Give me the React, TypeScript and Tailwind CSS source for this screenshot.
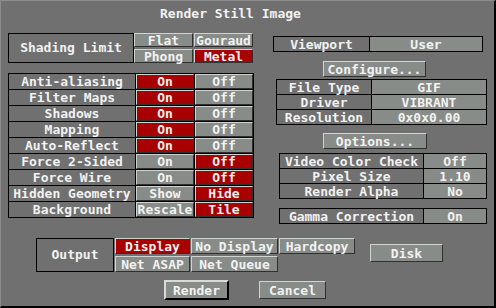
import React from "react";

const BG = "bg-[#707070]";

const toggles: [string, string, string, number][] = [
  ["Anti-aliasing", "On", "Off", 0],
  ["Filter Maps", "On", "Off", 0],
  ["Shadows", "On", "Off", 0],
  ["Mapping", "On", "Off", 0],
  ["Auto-Reflect", "On", "Off", 0],
  ["Force 2-Sided", "On", "Off", 1],
  ["Force Wire", "On", "Off", 1],
  ["Hidden Geometry", "Show", "Hide", 1],
  ["Background", "Rescale", "Tile", 1],
];

const Btn = ({ label, on, className = "" }: { label: string; on?: boolean; className?: string }) => (
  <div
    className={`flex items-center justify-center whitespace-nowrap leading-none border-t border-l border-t-[#d0d4d0] border-l-[#d0d4d0] border-b border-r border-b-[#303030] border-r-[#303030] ${
      on ? "bg-[#a80000]" : "bg-[#888c88]"
    } ${className}`}
  >
    {label}
  </div>
);

const Cell = ({ label, value }: { label: string; value: string }) => (
  <>
    <div className={`${BG} flex items-center justify-center whitespace-nowrap leading-none`}>{label}</div>
    <div className="bg-[#888c88] flex items-center justify-center whitespace-nowrap leading-none">{value}</div>
  </>
);

export default function App() {
  return (
    <div
      className={`w-[496px] h-[308px] ${BG} border-t border-l border-[#8c8c8c] border-r-2 border-b-2 border-r-black border-b-black text-[#f2f2f2] font-bold text-[13px] flex flex-col`}
      style={{ fontFamily: '"DejaVu Sans Mono", "Liberation Mono", monospace' }}
    >
      <div className="h-[32px] pl-[159px] pt-[5px] leading-[16px] whitespace-nowrap">Render Still Image</div>

      <div className="flex items-start">
        {/* left column */}
        <div className="ml-[7px] w-[246px] flex flex-col">
          <div className="flex">
            <div className="w-[126px] h-[30px] border border-black flex items-center justify-center">Shading Limit</div>
            <div className="grid grid-cols-[59px_59px] grid-rows-[14px_14px] gap-x-px gap-y-[2px]">
              <Btn label="Flat" />
              <Btn label="Gouraud" />
              <Btn label="Phong" />
              <Btn label="Metal" on />
            </div>
          </div>

          <div className="mt-[10px] grid grid-cols-[126px_58px_58px] auto-rows-[15px] gap-px p-px bg-black">
            {toggles.map(([name, a, b, sel]) => (
              <React.Fragment key={name}>
                <div className={`${BG} flex items-center justify-center whitespace-nowrap leading-none`}>{name}</div>
                <Btn label={a} on={sel === 0} />
                <Btn label={b} on={sel === 1} />
              </React.Fragment>
            ))}
          </div>
        </div>

        {/* right column */}
        <div className="ml-[19px] w-[214px] flex flex-col">
          <div className="mt-[3px] w-[210px] grid grid-cols-[95px_112px] auto-rows-[14px] gap-px p-px bg-black">
            <Cell label="Viewport" value="User" />
          </div>

          <Btn label="Configure..." className="mt-[9px] ml-[50px] w-[103px] h-[16px]" />

          <div className="mt-[2px] ml-[3px] w-[211px] grid grid-cols-[94px_114px] auto-rows-[14px] gap-px p-px bg-black">
            <Cell label="File Type" value="GIF" />
            <Cell label="Driver" value="VIBRANT" />
            <Cell label="Resolution" value="0x0x0.00" />
          </div>

          <Btn label="Options..." className="mt-[8px] ml-[50px] w-[104px] h-[16px]" />

          <div className="mt-[4px] ml-[6px] w-[208px] grid grid-cols-[143px_62px] auto-rows-[14px] gap-px p-px bg-black">
            <Cell label="Video Color Check" value="Off" />
            <Cell label="Pixel Size" value="1.10" />
            <Cell label="Render Alpha" value="No" />
          </div>

          <div className="mt-[9px] ml-[6px] w-[208px] grid grid-cols-[143px_62px] auto-rows-[14px] gap-px p-px bg-black">
            <Cell label="Gamma Correction" value="On" />
          </div>
        </div>
      </div>

      {/* output */}
      <div className="mt-[14px] ml-[35px] flex items-start">
        <div className="w-[78px] h-[34px] border border-black flex items-center justify-center">Output</div>
        <div className="ml-px grid grid-cols-[75px_87px_76px] grid-rows-[16px_16px] gap-x-px gap-y-[2px]">
          <Btn label="Display" on />
          <Btn label="No Display" />
          <Btn label="Hardcopy" />
          <Btn label="Net ASAP" />
          <Btn label="Net Queue" />
        </div>
        <Btn label="Disk" className="ml-[15px] mt-[6px] w-[73px] h-[18px]" />
      </div>

      <div className="mt-[8px] ml-[163px] flex items-center">
        <div className="w-[65px] h-[20px] bg-[#888c88] border-t-2 border-l-2 border-t-[#d8dcd8] border-l-[#d8dcd8] border-b-2 border-r-2 border-b-black border-r-black flex items-center justify-center leading-none">
          Render
        </div>
        <Btn label="Cancel" className="ml-[30px] w-[67px] h-[18px]" />
      </div>
    </div>
  );
}
